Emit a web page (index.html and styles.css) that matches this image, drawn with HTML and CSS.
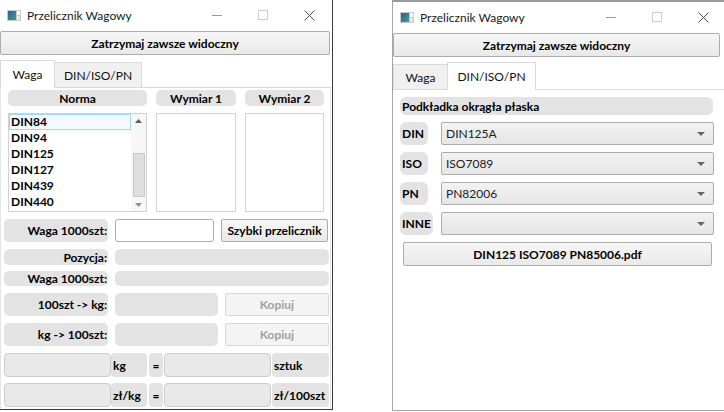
FILE: index.html
```html
<!DOCTYPE html>
<html lang="pl">
<head>
<meta charset="utf-8">
<title>Przelicznik Wagowy</title>
<link rel="stylesheet" href="styles.css">
</head>
<body>
<div class="screen">
  <div class="win win-left">
    <div class="titlebar">
      <svg class="appicon" width="14" height="11" viewBox="0 0 14 11"><defs><linearGradient id="g1" x1="0" y1="0" x2="1" y2="1"><stop offset="0" stop-color="#2b5f9e"/><stop offset="1" stop-color="#4d9a78"/></linearGradient></defs><rect x="0" y="0" width="14" height="11" fill="#c9c9c9"/><rect x="1" y="1" width="8" height="9" fill="url(#g1)"/><rect x="10" y="1" width="3" height="4" fill="#fff"/><rect x="10" y="6" width="3" height="4" fill="#e6e6e6"/></svg>
      <span class="wtitle">Przelicznik Wagowy</span>
      <div class="ctrls">
        <span class="cb"><svg width="10" height="10" viewBox="0 0 10 10"><line x1="0" y1="5.5" x2="10" y2="5.5" stroke="#9a9a9a" stroke-width="1"/></svg></span>
        <span class="cb"><svg width="10" height="10" viewBox="0 0 10 10"><rect x="0.5" y="0.5" width="9" height="9" fill="none" stroke="#cfcfcf" stroke-width="1"/></svg></span>
        <span class="cb"><svg width="11" height="11" viewBox="0 0 11 11"><path d="M0.5 0.5 L10.5 10.5 M10.5 0.5 L0.5 10.5" stroke="#4a4a4a" stroke-width="1" fill="none"/></svg></span>
      </div>
    </div>
    <button class="btn btn-top">Zatrzymaj zawsze widoczny</button>
    <div class="tabbar">
      <div class="tab tab-waga active">Waga</div>
      <div class="tab tab-din">DIN/ISO/PN</div>
    </div>
    <div class="panel panel-waga">
      <div class="cols">
        <div class="col col-norma">
          <div class="pill head">Norma</div>
          <div class="list">
            <div class="items">
              <div class="item sel">DIN84</div>
              <div class="item">DIN94</div>
              <div class="item">DIN125</div>
              <div class="item">DIN127</div>
              <div class="item">DIN439</div>
              <div class="item">DIN440</div>
            </div>
            <div class="vscroll">
              <svg class="arr" width="7" height="4" viewBox="0 0 7 4"><path d="M0 4 L3.5 0 L7 4 Z" fill="#606060"/></svg>
              <div class="thumb"></div>
              <svg class="arr" width="7" height="4" viewBox="0 0 7 4"><path d="M0 0 L3.5 4 L7 0 Z" fill="#909090"/></svg>
            </div>
          </div>
        </div>
        <div class="col col-w1">
          <div class="pill head">Wymiar 1</div>
          <div class="list"></div>
        </div>
        <div class="col col-w2">
          <div class="pill head">Wymiar 2</div>
          <div class="list"></div>
        </div>
      </div>

      <div class="frow r-tall r1">
        <div class="pill lab">Waga 1000szt:</div>
        <div class="input"></div>
        <button class="btn btn-quick">Szybki przelicznik</button>
      </div>
      <div class="frow r-short r2">
        <div class="pill lab">Pozycja:</div>
        <div class="pill val wide"></div>
      </div>
      <div class="frow r-short r3">
        <div class="pill lab">Waga 1000szt:</div>
        <div class="pill val wide"></div>
      </div>
      <div class="frow r-tall r4">
        <div class="pill lab">100szt -&gt; kg:</div>
        <div class="pill val half"></div>
        <button class="btn btn-copy" disabled>Kopiuj</button>
      </div>
      <div class="frow r-tall r5">
        <div class="pill lab">kg -&gt; 100szt:</div>
        <div class="pill val half"></div>
        <button class="btn btn-copy" disabled>Kopiuj</button>
      </div>
      <div class="frow r-calc r6">
        <div class="dinput"></div>
        <div class="pill unit u1">kg</div>
        <div class="pill eq">=</div>
        <div class="dinput d2"></div>
        <div class="pill unit u2">sztuk</div>
      </div>
      <div class="frow r-calc r7">
        <div class="dinput"></div>
        <div class="pill unit u1">zł/kg</div>
        <div class="pill eq">=</div>
        <div class="dinput d2"></div>
        <div class="pill unit u2">zł/100szt</div>
      </div>
    </div>
  </div>

  <div class="win win-right">
    <div class="titlebar">
      <svg class="appicon" width="14" height="11" viewBox="0 0 14 11"><defs><linearGradient id="g2" x1="0" y1="0" x2="1" y2="1"><stop offset="0" stop-color="#2b5f9e"/><stop offset="1" stop-color="#4d9a78"/></linearGradient></defs><rect x="0" y="0" width="14" height="11" fill="#c9c9c9"/><rect x="1" y="1" width="8" height="9" fill="url(#g2)"/><rect x="10" y="1" width="3" height="4" fill="#fff"/><rect x="10" y="6" width="3" height="4" fill="#e6e6e6"/></svg>
      <span class="wtitle">Przelicznik Wagowy</span>
      <div class="ctrls">
        <span class="cb"><svg width="10" height="10" viewBox="0 0 10 10"><line x1="0" y1="5.5" x2="10" y2="5.5" stroke="#9a9a9a" stroke-width="1"/></svg></span>
        <span class="cb"><svg width="10" height="10" viewBox="0 0 10 10"><rect x="0.5" y="0.5" width="9" height="9" fill="none" stroke="#cfcfcf" stroke-width="1"/></svg></span>
        <span class="cb"><svg width="11" height="11" viewBox="0 0 11 11"><path d="M0.5 0.5 L10.5 10.5 M10.5 0.5 L0.5 10.5" stroke="#4a4a4a" stroke-width="1" fill="none"/></svg></span>
      </div>
    </div>
    <button class="btn btn-top btn-top-r">Zatrzymaj zawsze widoczny</button>
    <div class="tabbar">
      <div class="tab tab-waga">Waga</div>
      <div class="tab tab-din active">DIN/ISO/PN</div>
    </div>
    <div class="panel panel-din">
      <div class="pill dhead">Podkładka okrągła płaska</div>
      <div class="crow">
        <div class="pill clab">DIN</div>
        <div class="combo"><span>DIN125A</span><svg width="8" height="4" viewBox="0 0 8 4"><path d="M0 0 L8 0 L4 4 Z" fill="#666"/></svg></div>
      </div>
      <div class="crow">
        <div class="pill clab">ISO</div>
        <div class="combo"><span>ISO7089</span><svg width="8" height="4" viewBox="0 0 8 4"><path d="M0 0 L8 0 L4 4 Z" fill="#666"/></svg></div>
      </div>
      <div class="crow">
        <div class="pill clab">PN</div>
        <div class="combo"><span>PN82006</span><svg width="8" height="4" viewBox="0 0 8 4"><path d="M0 0 L8 0 L4 4 Z" fill="#666"/></svg></div>
      </div>
      <div class="crow">
        <div class="pill clab">INNE</div>
        <div class="combo"><span></span><svg width="8" height="4" viewBox="0 0 8 4"><path d="M0 0 L8 0 L4 4 Z" fill="#666"/></svg></div>
      </div>
      <button class="btn btn-pdf">DIN125 ISO7089 PN85006.pdf</button>
    </div>
  </div>
</div>
</body>
</html>
```

FILE: styles.css
```css
* { box-sizing: border-box; }

body {
  margin: 0;
  background: #ffffff;
  font-family: Lato, "Noto Sans", "DejaVu Sans", sans-serif;
  font-size: 12px;
  color: #000;
}

.screen {
  display: flex;
  width: 724px;
  height: 412px;
  overflow: hidden;
  background: #fff;
}

.win {
  flex: none;
  display: flex;
  flex-direction: column;
  background: #fff;
}

.win-left {
  width: 333px;
  height: 410px;
  border-right: 1px solid #3a3a3a;
  border-bottom: 1px solid #3a3a3a;
}

.win-right {
  width: 334px;
  height: 411px;
  margin-left: 59px;
  border-left: 1px solid #a6a6a6;
  border-top: 2px solid #9c9c9c;
  border-bottom: 1px solid #a6a6a6;
}

/* title bar */
.titlebar {
  height: 30px;
  flex: none;
  display: flex;
  align-items: center;
  padding-left: 7px;
}
.appicon { flex: none; margin-top: 1px; }
.wtitle {
  margin-left: 6px;
  font-size: 12px;
  color: #1a1a1a;
}
.ctrls {
  margin-left: auto;
  display: flex;
  height: 30px;
}
.cb {
  width: 46px;
  height: 30px;
  display: flex;
  align-items: center;
  justify-content: center;
}

/* buttons */
.btn {
  font-family: inherit;
  font-size: 12px;
  font-weight: 700;
  color: #000;
  background: linear-gradient(#f6f6f6, #e9e9e9);
  border: 1px solid #acacac;
  border-radius: 2px;
  padding: 0;
  margin: 0;
  display: flex;
  align-items: center;
  justify-content: center;
}
.btn-top {
  height: 24px;
  margin: 1px 2px 0 0;
  flex: none;
}
.btn-top-r { margin: 1px 6px 0 0; }

/* tabs */
.tabbar {
  display: flex;
  align-items: flex-end;
  height: 32px;
  flex: none;
  position: relative;
  z-index: 1;
}
.tab {
  height: 25px;
  display: flex;
  align-items: center;
  justify-content: center;
  background: #f0f0f0;
  border: 1px solid #d9d9d9;
  border-bottom: none;
  font-size: 12px;
  color: #111;
  padding-top: 1px;
}
.tab.active {
  height: 28px;
  background: #fff;
  margin-bottom: -1px;
  padding-top: 0;
}
.tab-waga { width: 55px; }
.tab-din { width: 88px; margin-left: -1px; }
.tab.tab-din.active { width: 89px; }

.panel {
  flex: 1;
  border-top: 1px solid #d9d9d9;
  border-left: 1px solid #e4e4e4;
  border-right: 1px solid #e4e4e4;
}

/* pills */
.pill {
  background: #e3e3e3;
  border-radius: 5px;
  font-weight: 700;
  display: flex;
  align-items: center;
}

/* left panel */
.panel-waga {
  padding: 2px 0 0 2px;
  margin-right: 1px;
}
.cols {
  display: flex;
  padding-left: 5px;
  gap: 9px;
}
.col { display: flex; flex-direction: column; }
.col-norma { width: 139px; }
.col-w1 { width: 80px; }
.col-w2 { width: 79px; }
.head {
  height: 16px;
  justify-content: center;
}
.list {
  margin-top: 7px;
  height: 99px;
  border: 1px solid #d2d2d2;
  background: #fff;
  display: flex;
}
.items { flex: 1; }
.item {
  height: 16px;
  line-height: 16px;
  padding-left: 2px;
  font-weight: 700;
}
.item.sel {
  border: 1px solid #a9d3f2;
  background: #f3f9fe;
  line-height: 14px;
  padding-left: 1px;
}
.vscroll {
  width: 15px;
  background: #f7f7f7;
  display: flex;
  flex-direction: column;
  align-items: center;
  padding: 5px 0 4px;
}
.vscroll .thumb {
  width: 12px;
  height: 44px;
  margin-top: 30px;
  margin-bottom: auto;
  background: #dedede;
  border: 1px solid #c8c8c8;
}

.frow {
  display: flex;
  margin-left: 1px;
}
.r-tall { height: 23px; }
.r-short { height: 16px; }
.r-calc { height: 24px; }
.r1 { margin-top: 7px; }
.r2 { margin-top: 7px; }
.r3 { margin-top: 6px; height: 15px; }
.r4 { margin-top: 7px; }
.r5 { margin-top: 7px; }
.r6 { margin-top: 7px; }
.r7 { margin-top: 6px; }

.lab {
  width: 104px;
  justify-content: flex-end;
  padding-right: 1px;
}
.input {
  width: 99px;
  margin-left: 7px;
  background: #fff;
  border: 1px solid #abadb3;
  border-radius: 3px;
}
.btn-quick {
  width: 107px;
  margin-left: 7px;
}
.val { margin-left: 7px; }
.wide { width: 214px; }
.half { width: 103px; }
.btn-copy {
  width: 104px;
  margin-left: 7px;
  background: #f4f4f4;
  border-color: #d6d6d6;
  color: #a0a0a0;
}

.dinput {
  width: 107px;
  background: #e9e9e9;
  border: 1px solid #cdcdcd;
  border-radius: 4px;
}
.unit {
  padding-left: 2px;
  border-radius: 4px;
}
.u1 { width: 36px; }
.eq {
  width: 14px;
  margin-left: 2px;
  margin-right: 1px;
  justify-content: center;
  border-radius: 4px;
}
.u2 { width: 57px; margin-left: 1px; }

/* right panel */
.panel-din {
  padding: 7px 0 0 7px;
  border-left: none;
  border-right: none;
}
.dhead {
  width: 313px;
  height: 18px;
  padding-left: 2px;
  border-radius: 6px;
}
.crow {
  display: flex;
  height: 23px;
  margin-top: 7px;
}
.crow:first-of-type { margin-top: 6px; }
.clab {
  min-width: 28px;
  padding: 0 2px 0 2px;
  border-radius: 6px;
}
.combo {
  position: absolute;
}
.crow .combo {
  position: static;
  margin-left: auto;
  margin-right: 12px;
  width: 273px;
  height: 23px;
  border: 1px solid #acacac;
  border-radius: 2px;
  background: linear-gradient(#f2f2f2, #e6e6e6);
  display: flex;
  align-items: center;
  justify-content: space-between;
  padding: 0 8px 0 4px;
  font-size: 12px;
  color: #222;
}
.btn-pdf {
  width: 309px;
  height: 24px;
  margin: 7px 0 0 3px;
}
```
